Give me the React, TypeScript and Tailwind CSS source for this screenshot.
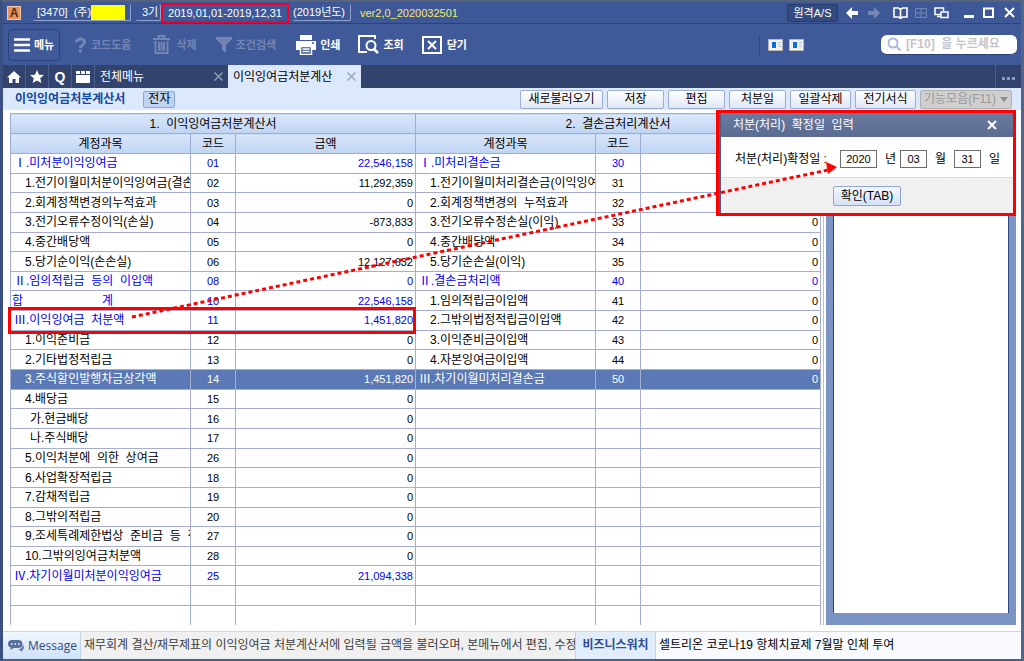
import { useState } from "react";
import type { ReactNode } from "react";

type Side = { label: string; code: string; amount?: string; level: 0 | 1 | 2 };

interface Row {
  left?: Side;
  right?: Side;
  selected?: boolean;
  marked?: boolean;
}

const side = (level: 0 | 1 | 2, label: string, code: string, amount = "0"): Side => ({ level, label, code, amount });

const rows: Row[] = [
  { left: side(0, "Ⅰ.미처분이익잉여금", "01", "22,546,158"), right: side(0, "Ⅰ.미처리결손금", "30") },
  { left: side(1, "1.전기이월미처분이익잉여금(결손금)", "02", "11,292,359"), right: side(1, "1.전기이월미처리결손금(이익잉여금)", "31") },
  { left: side(1, "2.회계정책변경의누적효과", "03"), right: side(1, "2.회계정책변경의  누적효과", "32") },
  { left: side(1, "3.전기오류수정이익(손실)", "04", "-873,833"), right: side(1, "3.전기오류수정손실(이익)", "33") },
  { left: side(1, "4.중간배당액", "05"), right: side(1, "4.중간배당액", "34") },
  { left: side(1, "5.당기순이익(손손실)", "06", "12,127,632"), right: side(1, "5.당기순손실(이익)", "35") },
  { left: side(0, "Ⅱ.임의적립금  등의  이입액", "08"), right: side(0, "Ⅱ.결손금처리액", "40") },
  { left: side(0, "합계", "10", "22,546,158"), right: side(1, "1.임의적립금이입액", "41") },
  { left: side(0, "Ⅲ.이익잉여금  처분액", "11", "1,451,820"), right: side(1, "2.그밖의법정적립금이입액", "42"), marked: true },
  { left: side(1, "1.이익준비금", "12"), right: side(1, "3.이익준비금이입액", "43") },
  { left: side(1, "2.기타법정적립금", "13"), right: side(1, "4.자본잉여금이입액", "44") },
  { left: side(1, "3.주식할인발행차금상각액", "14", "1,451,820"), right: side(0, "Ⅲ.차기이월미처리결손금", "50"), selected: true },
  { left: side(1, "4.배당금", "15") },
  { left: side(2, "가.현금배당", "16") },
  { left: side(2, "나.주식배당", "17") },
  { left: side(1, "5.이익처분에  의한  상여금", "26") },
  { left: side(1, "6.사업확장적립금", "18") },
  { left: side(1, "7.감채적립금", "19") },
  { left: side(1, "8.그밖의적립금", "20") },
  { left: side(1, "9.조세특례제한법상  준비금  등  적립금", "27") },
  { left: side(1, "10.그밖의잉여금처분액", "28") },
  { left: side(0, "Ⅳ.차기이월미처분이익잉여금", "25", "21,094,338") },
  {},
  {},
];

const indent = ["pl-[3px]", "pl-[14px]", "pl-[19px]"];

function SideCells({ data, selected, marked }: { data?: Side; selected?: boolean; marked?: boolean }) {
  const color = selected ? "text-white" : data?.level === 0 ? "text-[#0000f0]" : "text-black";
  const cell = `border-x border-b border-[#a5aed0] p-0 ${color}`;
  return (
    <>
      <td className={`${cell} relative`}>
        {data?.label === "합계" ? (
          <div className="flex w-[102px] justify-between pl-px"><span>합</span><span>계</span></div>
        ) : (
          <div className={`overflow-hidden whitespace-pre ${indent[data?.level ?? 0]}`}>{data?.label}</div>
        )}
        {marked && <div className="pointer-events-none absolute -inset-y-1 -left-[3px] w-[228%] border-3 border-[#f00]" />}
      </td>
      <td className={`${cell} text-center text-[11px]`}>{data?.code}</td>
      <td className={`${cell} pr-[2px] text-right text-[11px]`}>{data?.amount}</td>
    </>
  );
}

function LedgerTable() {
  const th = "border border-[#9dacd0] bg-linear-to-b from-[#d9e6f9] to-[#bfd4f3] p-0 font-normal";
  return (
    <table className="h-full w-full table-fixed border-collapse leading-4">
      <colgroup>
        <col />
        <col className="w-[45px]" />
        <col />
        <col />
        <col className="w-[45px]" />
        <col />
      </colgroup>
      <thead>
        <tr className="h-5">
          <th className={`${th} whitespace-pre`} colSpan={3}>1.  이익잉여금처분계산서</th>
          <th className={`${th} whitespace-pre`} colSpan={3}>2.  결손금처리계산서</th>
        </tr>
        <tr className="h-5">
          <th className={th}>계정과목</th>
          <th className={th}>코드</th>
          <th className={th}>금액</th>
          <th className={th}>계정과목</th>
          <th className={th}>코드</th>
          <th className={th}>금액</th>
        </tr>
      </thead>
      <tbody>
        {rows.map((row, i) => (
          <tr key={i} className={`h-[18px] last:[&>td]:border-b-0 ${row.selected ? "bg-[#5b79b5]" : ""}`}>
            <SideCells data={row.left} selected={row.selected} marked={row.marked} />
            <SideCells data={row.right} selected={row.selected} />
          </tr>
        ))}
      </tbody>
    </table>
  );
}

function TitleBar() {
  const field = "h-[17px] rounded-xs border-r border-b border-[#8fa3cf] leading-[17px] whitespace-pre";
  return (
    <header className="flex h-[22px] items-center border-b border-[#2b4379] bg-[#3e5897] pr-[6px] pl-1 text-[11px] text-white">
      <span className="flex h-[14px] w-[14px] items-center justify-center border border-[#f6c9a4] bg-[#e9935c] text-[12px] font-bold text-[#4b2a1c]">A</span>
      <span className={`${field} ml-3 flex w-[98px] items-center pl-1`}>
        [3470]  (주)<span className="h-[15px] w-[34px] bg-[#ff0]" />
      </span>
      <span className={`${field} ml-[5px] w-[25px] pl-[6px]`}>3기</span>
      <span className="flex h-5 w-[128px] items-center justify-center border-2 border-[#f5002d]">2019,01,01-2019,12,31</span>
      <span className={`${field} ml-1 w-[58px]`}>(2019년도)</span>
      <span className="ml-[9px] text-[#f0ea6a]">ver2,0_2020032501</span>
      <button className="ml-auto h-[18px] w-[51px] rounded-xs border border-[#263c70] bg-[#334a80] text-[11px] leading-4">원격A/S</button>
      <div className="ml-2 flex items-center">
        <button aria-label="뒤로" className="w-[22px]">
          <svg width="12" height="12" viewBox="0 0 12 12"><path d="M0 6 6 0v4h6v4H6v4z" fill="#fff" /></svg>
        </button>
        <button aria-label="앞으로" className="w-[25px]">
          <svg width="12" height="12" viewBox="0 0 12 12"><path d="M12 6 6 0v4H0v4h6v4z" fill="#7488b8" /></svg>
        </button>
        <button aria-label="도움말" className="w-[22px]">
          <svg width="15" height="12" viewBox="0 0 15 12" fill="none" stroke="#fff" strokeWidth="1.6"><path d="M1 1h4.500l2 1.500 2-1.500H14v9H9.500l-2 1.500-2-1.500H1zM7.500 2v9" /></svg>
        </button>
        <button aria-label="바둑판" className="w-[19px]">
          <svg width="12" height="10" viewBox="0 0 12 10" fill="none" stroke="#7488b8"><path d="M.5.5h11v9H.5zM6 0v10M0 5h12" /></svg>
        </button>
        <button aria-label="창 배열" className="w-[30px]">
          <svg width="15" height="12" viewBox="0 0 15 12" fill="none" stroke="#fff" strokeWidth="1.500"><path d="M7 7.500H1V1h8.500v3M7 5h7v5.500H7zM3 9.500h3" /></svg>
        </button>
        <button aria-label="최소화" className="w-[19px]">
          <svg width="11" height="12" viewBox="0 0 11 12"><path d="M0 8h10v3H0z" fill="#fff" /></svg>
        </button>
        <button aria-label="최대화" className="w-[21px]">
          <svg width="11" height="11" viewBox="0 0 11 11"><path d="M1 1.500h9V10H1z" fill="none" stroke="#fff" strokeWidth="2" /></svg>
        </button>
        <button aria-label="닫기">
          <svg width="11" height="11" viewBox="0 0 11 11"><path d="m1 1 9 9M10 1l-9 9" stroke="#fff" strokeWidth="2" /></svg>
        </button>
      </div>
    </header>
  );
}

function ToolButton({ icon, label, className, disabled }: { icon: ReactNode; label: string; className: string; disabled?: boolean }) {
  return (
    <button disabled={disabled} className={`flex items-center text-[11px] font-bold ${disabled ? "text-[#7285b5]" : "text-white"} ${className}`}>
      {icon}
      {label}
    </button>
  );
}

function LayoutIcon() {
  return (
    <svg width="15" height="12" viewBox="0 0 15 12">
      <path d="M.5.5h14v11H.5z" fill="#f1f1ee" stroke="#b9b7b4" />
      <path d="M4 3h4v6H4z" fill="#0a6fd8" />
      <path d="M10 3.500h3M10 5.500h2M10 7.500h3" stroke="#b5c3d4" />
    </svg>
  );
}

function Toolbar() {
  return (
    <div className="flex h-[41px] items-center bg-[#405998] pr-1 pl-[5px]">
      <ToolButton
        label="메뉴"
        className="h-8 w-[52px] gap-1 rounded-sm border border-[#2d4379] pl-[5px]"
        icon={<svg width="16" height="14" viewBox="0 0 16 14"><path d="M0 1.500h16M0 7h16M0 12.500h16" stroke="#fff" strokeWidth="2.500" /></svg>}
      />
      <ToolButton
        disabled
        label="코드도움"
        className="ml-[14px] gap-1"
        icon={<svg width="13" height="16" viewBox="0 0 13 16" fill="none" stroke="#7285b5" strokeWidth="3"><path d="M2.500 5.500C2.500 0.800 10.500 0.800 10.500 5c0 3-4 3-4 6M6.500 12.500v3" /></svg>}
      />
      <ToolButton
        disabled
        label="삭제"
        className="ml-[22px] gap-[6px]"
        icon={
          <svg width="17" height="19" viewBox="0 0 17 19" fill="none" stroke="#7285b5" strokeWidth="2">
            <path d="M0 4h17M5.500 4V1h6v3M2.500 6v12h12V6M6 7v9M8.500 7v9M11 7v9" />
          </svg>
        }
      />
      <ToolButton
        disabled
        label="조건검색"
        className="ml-[19px] gap-1"
        icon={<svg width="16" height="16" viewBox="0 0 16 16"><path d="M0 0h16v2l-6 6v8l-4-3V8L0 2z" fill="#7285b5" /></svg>}
      />
      <ToolButton
        label="인쇄"
        className="ml-5 gap-1"
        icon={
          <svg width="20" height="20" viewBox="0 0 20 20">
            <path d="M4 0h12v5H4zM0 6h20v9h-4v-4H4v4H0z" fill="#fff" />
            <path d="M4.500 11.500h11v8h-11zM6.500 14h7M6.500 16.500h7" fill="none" stroke="#fff" strokeWidth="1.500" />
            <path d="M16 8h2" stroke="#405998" strokeWidth="1.500" />
          </svg>
        }
      />
      <ToolButton
        label="조회"
        className="ml-[18px] gap-1"
        icon={
          <svg width="21" height="19" viewBox="0 0 21 19" fill="none" stroke="#fff" strokeWidth="2">
            <path d="M17 4V1H1v16h8" />
            <circle cx="13" cy="10.500" r="4.500" />
            <path d="m16 14 4 4" strokeWidth="2.500" />
          </svg>
        }
      />
      <ToolButton
        label="닫기"
        className="ml-[18px] gap-[5px]"
        icon={<svg width="20" height="18" viewBox="0 0 20 18" fill="none" stroke="#fff" strokeWidth="2"><path d="M1 1h18v16H1zM6 5l8 8M14 5l-8 8" /></svg>}
      />
      <div className="ml-auto flex h-5 items-center gap-[6px] border-l border-[#2f477f] pl-2">
        <LayoutIcon />
        <LayoutIcon />
      </div>
      <label className="ml-[77px] flex h-5 w-[136px] items-center gap-1 rounded-md border-b border-[#2b4379] bg-white pl-[6px]">
        <svg width="15" height="15" viewBox="0 0 15 15" fill="none" stroke="#aab8da" strokeWidth="2" className="shrink-0">
          <circle cx="6" cy="6" r="4.500" />
          <path d="m9.500 9.500 4 4" />
        </svg>
        <input aria-label="검색" placeholder="[F10]  을 누르세요" className="w-full min-w-0 bg-transparent font-bold outline-none placeholder:text-[#c3c5cc]" />
      </label>
    </div>
  );
}

function CloseX({ color }: { color: string }) {
  return (
    <svg width="9" height="9" viewBox="0 0 9 9"><path d="m.5.5 8 8M8.500.5l-8 8" stroke={color} strokeWidth="1.500" /></svg>
  );
}

function TabBar() {
  const cell = "flex h-full w-[23px] items-center justify-center border-r border-[#4b5f8c]";
  return (
    <nav className="flex h-[23px] items-center bg-[#32446e] text-white">
      <button aria-label="홈" className={cell}>
        <svg width="14" height="12" viewBox="0 0 14 12"><path d="M7 0 0 6.500h2V12h3.500V8h3v4H12V6.500h2z" fill="#fff" /></svg>
      </button>
      <button aria-label="즐겨찾기" className={cell}>
        <svg width="14" height="13" viewBox="0 0 14 13"><path d="m7 0 2 4.700 5 .4-3.800 3.200L11.400 13 7 10.500 2.600 13l1.200-4.700L0 5.100l5-.4z" fill="#fff" /></svg>
      </button>
      <button aria-label="빠른메뉴" className={`${cell} text-[14px] font-bold`}>Q</button>
      <button aria-label="창" className={cell}>
        <svg width="14" height="12" viewBox="0 0 14 12"><path d="M0 0h4v3H0zM5 0h4v3H5zM10 0h4v3h-4zM0 4h14v8H0z" fill="#fff" /></svg>
      </button>
      <div className="flex h-full w-[133px] items-center justify-between px-[5px]">
        전체메뉴
        <button aria-label="전체메뉴 닫기"><CloseX color="#8d9abb" /></button>
      </div>
      <div className="flex h-full w-[133px] items-center justify-between bg-[#dce8fb] px-[5px] text-black">
        이익잉여금처분계산
        <button aria-label="탭 닫기"><CloseX color="#98a8c4" /></button>
      </div>
      <button aria-label="더보기" className="ml-auto flex h-full w-[26px] items-center justify-center border-l border-[#4b5f8c] pt-1">
        <svg width="13" height="3" viewBox="0 0 13 3"><path d="M0 0h3v3H0zM5 0h3v3H5zM10 0h3v3h-3z" fill="#8d9abb" /></svg>
      </button>
    </nav>
  );
}

const actions = [
  { label: "새로불러오기", width: "w-[83px]" },
  { label: "저장", width: "w-[57px]" },
  { label: "편집", width: "w-[57px]" },
  { label: "처분일", width: "w-[57px]" },
  { label: "일괄삭제", width: "w-[61px]" },
  { label: "전기서식", width: "w-[61px]" },
];

function ActionBar() {
  return (
    <div className="flex h-[22px] items-center gap-1 bg-[#dce8fb] pr-[9px] pl-3">
      <h1 className="font-bold text-[#1148a0]">이익잉여금처분계산서</h1>
      <button className="ml-[14px] h-[17px] w-8 rounded-xs border border-[#8ba7d4] bg-[#bfd3f2] leading-[14px]">전자</button>
      <div className="ml-auto flex gap-1">
        {actions.map((a) => (
          <button key={a.label} className={`h-[19px] rounded-xs border border-[#9aaed6] bg-linear-to-b from-white to-[#dfe6f4] leading-4 ${a.width}`}>
            {a.label}
          </button>
        ))}
        <button disabled className="flex h-[19px] w-[92px] items-center justify-center gap-1 rounded-xs border border-[#b0b0b0] bg-[#cfcfcf] leading-4 text-[#999]">
          기능모음(F11)
          <svg width="8" height="5" viewBox="0 0 8 5"><path d="M0 0h8L4 5z" fill="#8a8a8a" /></svg>
        </button>
      </div>
    </div>
  );
}

function DateDialog() {
  const [date, setDate] = useState({ year: "2020", month: "03", day: "31" });
  const box = "h-[18px] border border-[#6d6d6d] bg-white p-0 text-center text-[11px]";
  return (
    <section role="dialog" aria-label="처분(처리) 확정일 입력" className="absolute top-0 right-[5px] w-[300px] border-3 border-[#f00] bg-white">
      <div className="border-l-2 border-[#4d5e82]">
        <div className="flex h-6 items-center justify-between bg-linear-to-b from-[#6b7b9f] to-[#5a6b92] pr-4 pl-3 text-white">
          <h2 className="whitespace-pre">처분(처리)  확정일  입력</h2>
          <button aria-label="대화상자 닫기">
            <svg width="10" height="10" viewBox="0 0 10 10"><path d="m1 1 8 8M9 1 1 9" stroke="#fff" strokeWidth="2" /></svg>
          </button>
        </div>
        <div className="flex h-10 items-center pt-1 pl-[14px]">
          <span className="w-[105px] whitespace-pre">처분(처리)확정일 :</span>
          <label className="flex items-center gap-2">
            <input className={`${box} w-[37px]`} value={date.year} onChange={(e) => setDate({ ...date, year: e.target.value })} />년
          </label>
          <label className="ml-1 flex items-center gap-2">
            <input className={`${box} w-[27px]`} value={date.month} onChange={(e) => setDate({ ...date, month: e.target.value })} />월
          </label>
          <label className="ml-2 flex items-center gap-2">
            <input className={`${box} w-[27px]`} value={date.day} onChange={(e) => setDate({ ...date, day: e.target.value })} />일
          </label>
        </div>
        <div className="flex h-9 items-center justify-center border-t border-[#dcdcdc] bg-[#f0f0f0]">
          <button className="h-5 w-[68px] rounded-xs border border-[#8fa6d2] bg-linear-to-b from-[#f3f7fe] to-[#d6e2f6] leading-4">확인(TAB)</button>
        </div>
      </div>
    </section>
  );
}

function StatusBar() {
  return (
    <footer className="flex h-7 items-stretch border-t border-[#d5d5d5] bg-[#f8fafe] leading-[27px]">
      <div className="flex w-[78px] items-center gap-1 border-r border-[#c5d3e8] bg-linear-to-b from-[#f2f8ff] to-[#cfe0f8] pl-[5px] font-['Open_Sans'] text-[#33497c]">
        <svg width="16" height="12" viewBox="0 0 16 12">
          <path d="M4 0h6c3 0 4.500 1.500 4.500 4S13 8 10 8H6l-4 2 1-2.500C.8 7 0 5.800 0 4c0-2.500 1.500-4 4-4z" fill="#566d9f" />
          <path d="M15 5c2 3 0 5-1 5l1 2-3.500-2H8c4 0 6-2 7-5z" fill="#566d9f" />
          <path d="M3 4h1.500M6.500 4H8M10 4h1.500" stroke="#fff" strokeWidth="1.500" />
        </svg>
        Message
      </div>
      <p className="w-[494px] overflow-hidden bg-[#f0f0f0] pl-[3px] whitespace-nowrap text-[#3c3c3c]">
        재무회계 결산/재무제표의 이익잉여금 처분계산서에 입력될 금액을 불러오며, 본메뉴에서 편집, 수정
      </p>
      <strong className="w-[81px] border-x border-[#c5d3e8] bg-[#e2edfc] text-center text-[#2d4d94]">비즈니스워치</strong>
      <p className="pl-[3px] text-black">셀트리온 코로나19 항체치료제 7월말 인체 투여</p>
    </footer>
  );
}

export default function App() {
  return (
    <div className="relative flex h-screen min-h-[640px] flex-col border-t-2 border-r-3 border-b-2 border-l-3 border-t-[#566279] border-r-[#52658a] border-b-[#4a5f85] border-l-[#3a5082] bg-white font-['Liberation_Sans','Noto_Sans_CJK_KR',sans-serif] text-[12px] leading-4 text-black">
      <TitleBar />
      <Toolbar />
      <TabBar />
      <ActionBar />
      <main className="relative flex min-h-0 flex-1 pt-[3px] pr-[5px] pb-[6px] pl-[7px]">
        <div className="min-w-0 flex-1">
          <LedgerTable />
        </div>
        <aside className="ml-[2px] w-[193px] border-l border-[#b4bfd8] pl-[2px]">
          <div className="h-full border-x-[7px] border-b-[12px] border-[#7b94c4] bg-white">
            <div className="h-full border-x border-[#27467f]" />
          </div>
        </aside>
        <DateDialog />
      </main>
      <StatusBar />

      {/* guide arrow from the selected account to the date field */}
      <svg className="pointer-events-none absolute top-0 left-0" width="850" height="330" viewBox="3 2 850 330">
        <path d="M132 317 828 170" stroke="#f00" strokeWidth="3" strokeDasharray="4 3" fill="none" />
        <path d="M837 167 826 162l2 12z" fill="#f00" />
      </svg>
    </div>
  );
}
